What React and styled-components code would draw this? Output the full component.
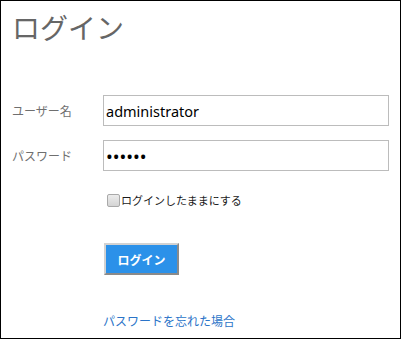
import React from 'react';
import styled, { createGlobalStyle } from 'styled-components';

const GlobalStyle = createGlobalStyle`
  html, body {
    margin: 0;
    padding: 0;
    background: #ffffff;
  }
  body {
    font-family: "Noto Sans", "Noto Sans CJK JP", sans-serif;
  }
`;

const Frame = styled.div`
  box-sizing: border-box;
  width: 401px;
  height: 339px;
  border: 1px solid #000000;
  padding: 0 12px 0 11px;
  background: #ffffff;
`;

const Title = styled.h1`
  margin: 0;
  padding-top: 7px;
  font-family: "Noto Sans CJK JP", sans-serif;
  font-size: 28px;
  line-height: 38px;
  font-weight: 400;
  color: #666666;
`;

const Form = styled.form`
  display: grid;
  grid-template-columns: 91px 286px;
  margin-top: 49px;
`;

const Label = styled.label`
  align-self: center;
  font-family: "Noto Sans CJK JP", sans-serif;
  font-size: 12px;
  color: #6f6f6f;
  margin-top: ${(p) => p.$top || 0}px;
`;

const TextInput = styled.input`
  box-sizing: border-box;
  width: 286px;
  height: 31px;
  margin: ${(p) => p.$top || 0}px 0 0;
  padding: 0 2px;
  border: 1px solid #bcbcbc;
  border-radius: 0;
  outline: none;
  font-family: "Noto Sans", sans-serif;
  font-size: ${(p) => p.$size || 14.5}px;
  color: #000000;
  background: #ffffff;
`;

const Field = styled.div`
  grid-column: 2;
  margin-top: ${(p) => p.$top || 0}px;
`;

const CheckRow = styled(Field)`
  display: flex;
  align-items: center;
  gap: 1px;
  height: 20px;
  padding-left: 4px;
`;

const Check = styled.input`
  appearance: none;
  box-sizing: border-box;
  width: 13px;
  height: 13px;
  margin: 0;
  border: 1px solid #a9a9a9;
  border-radius: 2px;
  background: linear-gradient(#ececec, #d4d4d4);
`;

const CheckText = styled.span`
  font-family: "Noto Sans CJK JP", sans-serif;
  font-size: 11px;
  color: #1a1a1a;
`;

const Submit = styled.button`
  box-sizing: border-box;
  width: 75px;
  height: 32px;
  margin-left: 1px;
  border: 2px solid;
  border-color: #d2d2d2 #8a8a8a #8a8a8a #d2d2d2;
  background: #2b91e9;
  color: #ffffff;
  font-family: "Noto Sans CJK JP", sans-serif;
  font-size: 12px;
  font-weight: 700;
  padding: 0;
  cursor: pointer;
`;

const ForgotLink = styled.a`
  font-family: "Noto Sans CJK JP", sans-serif;
  font-size: 12px;
  line-height: 18px;
  color: #2b74c8;
  text-decoration: none;
`;

export default function App() {
  return (
    <>
      <GlobalStyle />
      <Frame>
        <Title>ログイン</Title>
        <Form onSubmit={(e) => e.preventDefault()}>
          <Label htmlFor="user">ユーザー名</Label>
          <TextInput id="user" type="text" defaultValue="administrator" />
          <Label htmlFor="pass" $top={14}>パスワード</Label>
          <TextInput id="pass" type="password" defaultValue="123456" $top={14} $size={18} />
          <CheckRow $top={19}>
            <Check type="checkbox" id="keep" />
            <CheckText>ログインしたままにする</CheckText>
          </CheckRow>
          <Field $top={33}>
            <Submit type="submit">ログイン</Submit>
          </Field>
          <Field $top={34}>
            <ForgotLink href="#">パスワードを忘れた場合</ForgotLink>
          </Field>
        </Form>
      </Frame>
    </>
  );
}
